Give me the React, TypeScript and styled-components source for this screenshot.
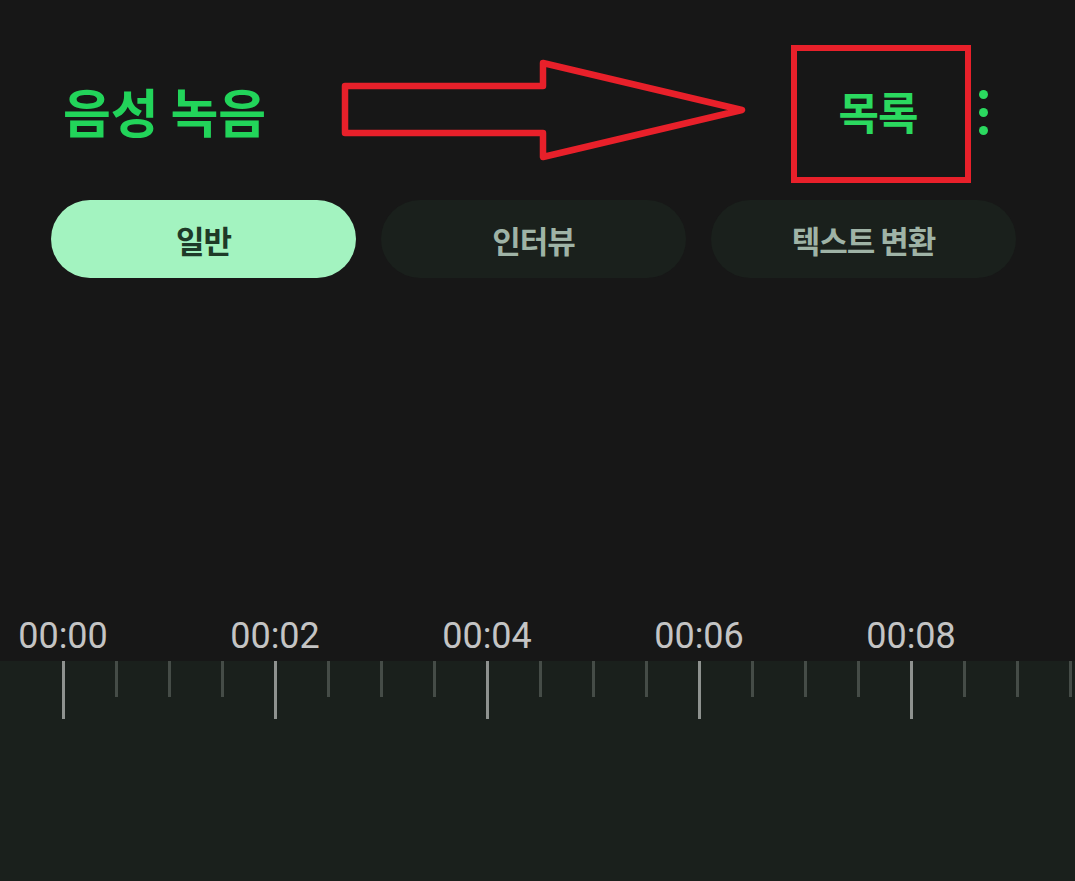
import React from 'react';
import styled, { createGlobalStyle } from 'styled-components';

const GlobalStyle = createGlobalStyle`
  html, body {
    margin: 0;
    padding: 0;
    background: #171717;
  }
  * {
    box-sizing: border-box;
  }
`;

const korean = `'Noto Sans CJK KR', 'Noto Sans', sans-serif`;

const tabs = ['일반', '인터뷰', '텍스트 변환'];
const times = ['00:00', '00:02', '00:04', '00:06', '00:08'];
const tickCount = 20;

const App = () => {
  return (
    <Screen>
      <GlobalStyle />
      <Header>
        <Title>음성 녹음</Title>
        <Arrow width='408' height='106' viewBox='0 0 408 106'>
          <polygon
            points='5,29 203,29 203,6 402,53 203,100 203,76 5,76'
            fill='none'
            stroke='#e8202a'
            strokeWidth='6.5'
            strokeLinejoin='round'
          />
        </Arrow>
        <Highlight>
          <ListButton>목록</ListButton>
        </Highlight>
        <MoreMenu>
          <Dot />
          <Dot />
          <Dot />
        </MoreMenu>
      </Header>

      <TabBar>
        {tabs.map((label, i) => (
          <Tab key={label} $active={i === 0}>
            {label}
          </Tab>
        ))}
      </TabBar>

      <TimeRow>
        {times.map((t) => (
          <TimeCell key={t}>
            <TimeLabel>{t}</TimeLabel>
          </TimeCell>
        ))}
      </TimeRow>

      <TickArea>
        <TickRow>
          {Array.from({ length: tickCount }).map((_, i) => (
            <Tick key={i} $major={i % 4 === 0} />
          ))}
        </TickRow>
      </TickArea>
    </Screen>
  );
};

export default App;

const Screen = styled.div`
  min-height: 100vh;
  display: flex;
  flex-direction: column;
  background: #171717;
  overflow: hidden;
`;

const Header = styled.div`
  display: flex;
  align-items: center;
  height: 138px;
  margin-top: 45px;
  padding-left: 63px;
`;

const Title = styled.h1`
  flex: 0 0 277px;
  margin: 0;
  font-family: ${korean};
  font-size: 52px;
  font-weight: 700;
  letter-spacing: 0;
  color: #22d45a;
  line-height: 1;
  margin-top: -7px;
`;

const Arrow = styled.svg`
  flex: 0 0 auto;
  display: block;
  margin-top: -8px;
`;

const Highlight = styled.div`
  flex: 0 0 180px;
  height: 138px;
  margin-left: 43px;
  border: 6px solid #e8202a;
  display: flex;
  align-items: center;
  justify-content: center;
`;

const ListButton = styled.span`
  font-family: ${korean};
  font-size: 44px;
  font-weight: 700;
  letter-spacing: -1px;
  color: #2bd95f;
  line-height: 1;
  margin-top: -6px;
  margin-right: 6px;
`;

const MoreMenu = styled.div`
  display: flex;
  flex-direction: column;
  gap: 9px;
  margin-left: 8px;
  margin-top: -4px;
`;

const Dot = styled.span`
  width: 9px;
  height: 9px;
  border-radius: 50%;
  background: #2bd95f;
`;

const TabBar = styled.div`
  display: flex;
  gap: 25px;
  margin-top: 17px;
  padding-left: 51px;
`;

const Tab = styled.div<{ $active?: boolean }>`
  flex: 0 0 305px;
  height: 78px;
  border-radius: 39px;
  display: flex;
  align-items: center;
  justify-content: center;
  font-family: ${korean};
  font-size: 31px;
  font-weight: 700;
  letter-spacing: -1px;
  background: ${({ $active }) => ($active ? '#a3f3c0' : '#1a201c')};
  color: ${({ $active }) => ($active ? '#1e3a28' : '#9fb3a6')};
`;

const TimeRow = styled.div`
  display: flex;
  margin-top: 340px;
  padding-left: 63px;
  height: 36px;
`;

const TimeCell = styled.div`
  flex: 0 0 212px;
`;

const TimeLabel = styled.span`
  display: inline-block;
  transform: translateX(-50%);
  font-family: Roboto, 'Liberation Sans', sans-serif;
  font-size: 36px;
  line-height: 36px;
  color: #c4c4c4;
`;

const TickArea = styled.div`
  flex: 1;
  margin-top: 7px;
  background: #1a201c;
`;

const TickRow = styled.div`
  display: flex;
  padding-left: 62px;
`;

const Tick = styled.div<{ $major?: boolean }>`
  flex: 0 0 53px;
  height: 58px;
  &::before {
    content: '';
    display: block;
    width: 3px;
    height: ${({ $major }) => ($major ? '58px' : '36px')};
    background: ${({ $major }) => ($major ? '#8e928f' : '#454c47')};
  }
`;
